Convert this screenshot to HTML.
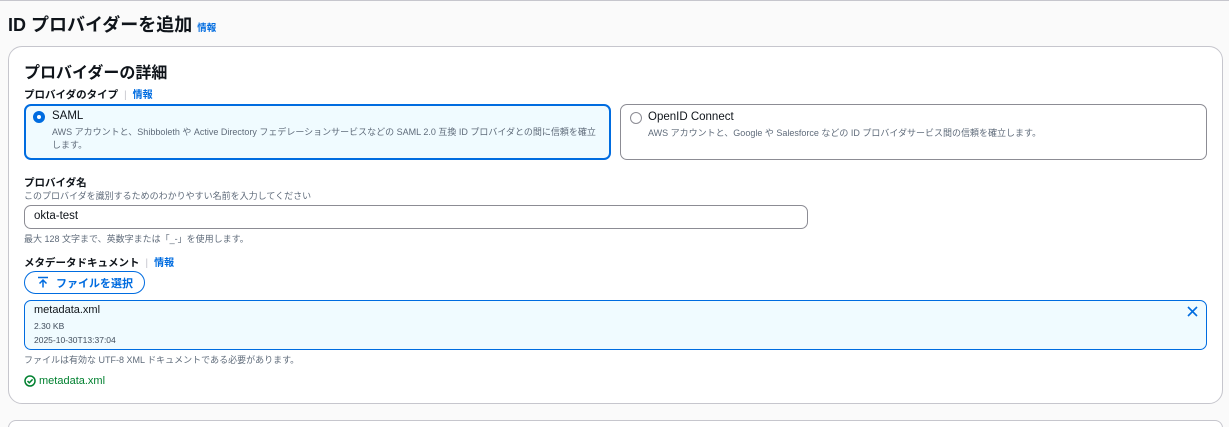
<!DOCTYPE html>
<html style="width:1229px;height:427px;overflow:hidden"><head><meta charset="utf-8"><style>
*{box-sizing:border-box;margin:0;padding:0}
body{width:1229px;height:427px;background:#fafafa;font-family:"Liberation Sans","Noto Sans CJK JP",sans-serif;color:#0f141a;position:relative;overflow:hidden;border-top:1px solid #c6c6cd}
.a{position:absolute;white-space:nowrap}
.info{color:#006ce0;font-weight:bold;font-size:10px}
.card{position:absolute;left:8px;top:45px;width:1215px;height:358px;background:#fff;border:1px solid #c6c6cd;border-radius:14px}
.card2{position:absolute;left:8px;top:419px;width:1215px;height:8px;background:#fff;border:1px solid #c6c6cd;border-bottom:none;border-radius:14px 14px 0 0}
.lbl{font-size:11.5px;font-weight:bold}
.sm{font-size:9.5px;color:#5f6b7a}
.tile{position:absolute;top:103px;width:587px;height:56px;border-radius:7px}
</style></head><body>
<div class="a" style="left:8px;top:10px;font-size:18px;font-weight:bold">ID プロバイダーを追加 <span class="info" style="font-size:9.5px">情報</span></div>
<div class="card"></div>
<div class="card2"></div>
<div class="a" style="left:24px;top:58px;font-size:16px;font-weight:bold">プロバイダーの詳細</div>
<div class="a lbl" style="left:24px;top:85px;font-size:10.5px">プロバイダのタイプ <span style="color:#c6c6cd;font-weight:normal;margin:0 3px">|</span> <span class="info">情報</span></div>
<div class="tile" style="left:24px;background:#f0fbff;border:2px solid #006ce0"></div>
<div class="a" style="left:33px;top:110px;width:12px;height:12px;border-radius:50%;border:4px solid #006ce0;background:#fff"></div>
<div class="a" style="left:52px;top:109px;font-size:11.5px">SAML</div>
<div class="a sm" style="left:52px;top:125px;line-height:13px;font-size:9px">AWS アカウントと、Shibboleth や Active Directory フェデレーションサービスなどの SAML 2.0 互換 ID プロバイダとの間に信頼を確立<br>します。</div>
<div class="tile" style="left:620px;background:#fff;border:1px solid #8c8c94"></div>
<div class="a" style="left:630px;top:111px;width:12px;height:12px;border-radius:50%;border:1px solid #8c8c94;background:#fff"></div>
<div class="a" style="left:648px;top:110px;font-size:11.5px">OpenID Connect</div>
<div class="a sm" style="left:648px;top:125px;font-size:9px">AWS アカウントと、Google や Salesforce などの ID プロバイダサービス間の信頼を確立します。</div>
<div class="a lbl" style="left:24px;top:174px;font-size:10.5px">プロバイダ名</div>
<div class="a sm" style="left:24px;top:188px;font-size:9px">このプロバイダを識別するためのわかりやすい名前を入力してください</div>
<div class="a" style="left:24px;top:204px;width:784px;height:24px;border:1px solid #8c8c94;border-radius:7px;background:#fff"></div>
<div class="a" style="left:34px;top:209px;font-size:11.5px">okta-test</div>
<div class="a sm" style="left:24px;top:231px;font-size:9px">最大 128 文字まで、英数字または「_-」を使用します。</div>
<div class="a lbl" style="left:24px;top:253px;font-size:10.5px">メタデータドキュメント <span style="color:#c6c6cd;font-weight:normal;margin:0 3px">|</span> <span class="info">情報</span></div>
<div class="a" style="left:24px;top:270px;width:121px;height:23px;border:1.5px solid #006ce0;border-radius:12px;background:#fff"></div>
<svg class="a" style="left:37px;top:275px" width="12" height="12" viewBox="0 0 12 12"><path d="M1 1.5h10M6 4v7.5M2.5 7.5L6 4l3.5 3.5" stroke="#006ce0" stroke-width="1.5" fill="none"/></svg>
<div class="a" style="left:56px;top:274px;font-size:11px;font-weight:bold;color:#006ce0">ファイルを選択</div>
<div class="a" style="left:24px;top:299px;width:1183px;height:50px;border:1.5px solid #006ce0;border-radius:7px;background:#f0fbff"></div>
<div class="a" style="left:34px;top:303px;font-size:11px">metadata.xml</div>
<div class="a" style="left:34px;top:320px;font-size:8.5px;color:#414d5c">2.30 KB</div>
<div class="a" style="left:34px;top:334px;font-size:8.5px;color:#414d5c">2025-10-30T13:37:04</div>
<svg class="a" style="left:1187px;top:305px" width="11" height="11" viewBox="0 0 11 11"><path d="M1 1L10 10M10 1L1 10" stroke="#006ce0" stroke-width="1.6"/></svg>
<div class="a sm" style="left:24px;top:352px;font-size:9px">ファイルは有効な UTF-8 XML ドキュメントである必要があります。</div>
<svg class="a" style="left:24px;top:374px" width="12" height="12" viewBox="0 0 12 12"><circle cx="6" cy="6" r="5" stroke="#00802f" stroke-width="1.5" fill="none"/><path d="M3.5 6l1.8 1.8L8.6 4.4" stroke="#00802f" stroke-width="1.5" fill="none"/></svg>
<div class="a" style="left:39px;top:374px;font-size:11px;color:#00802f">metadata.xml</div>
</body></html>
